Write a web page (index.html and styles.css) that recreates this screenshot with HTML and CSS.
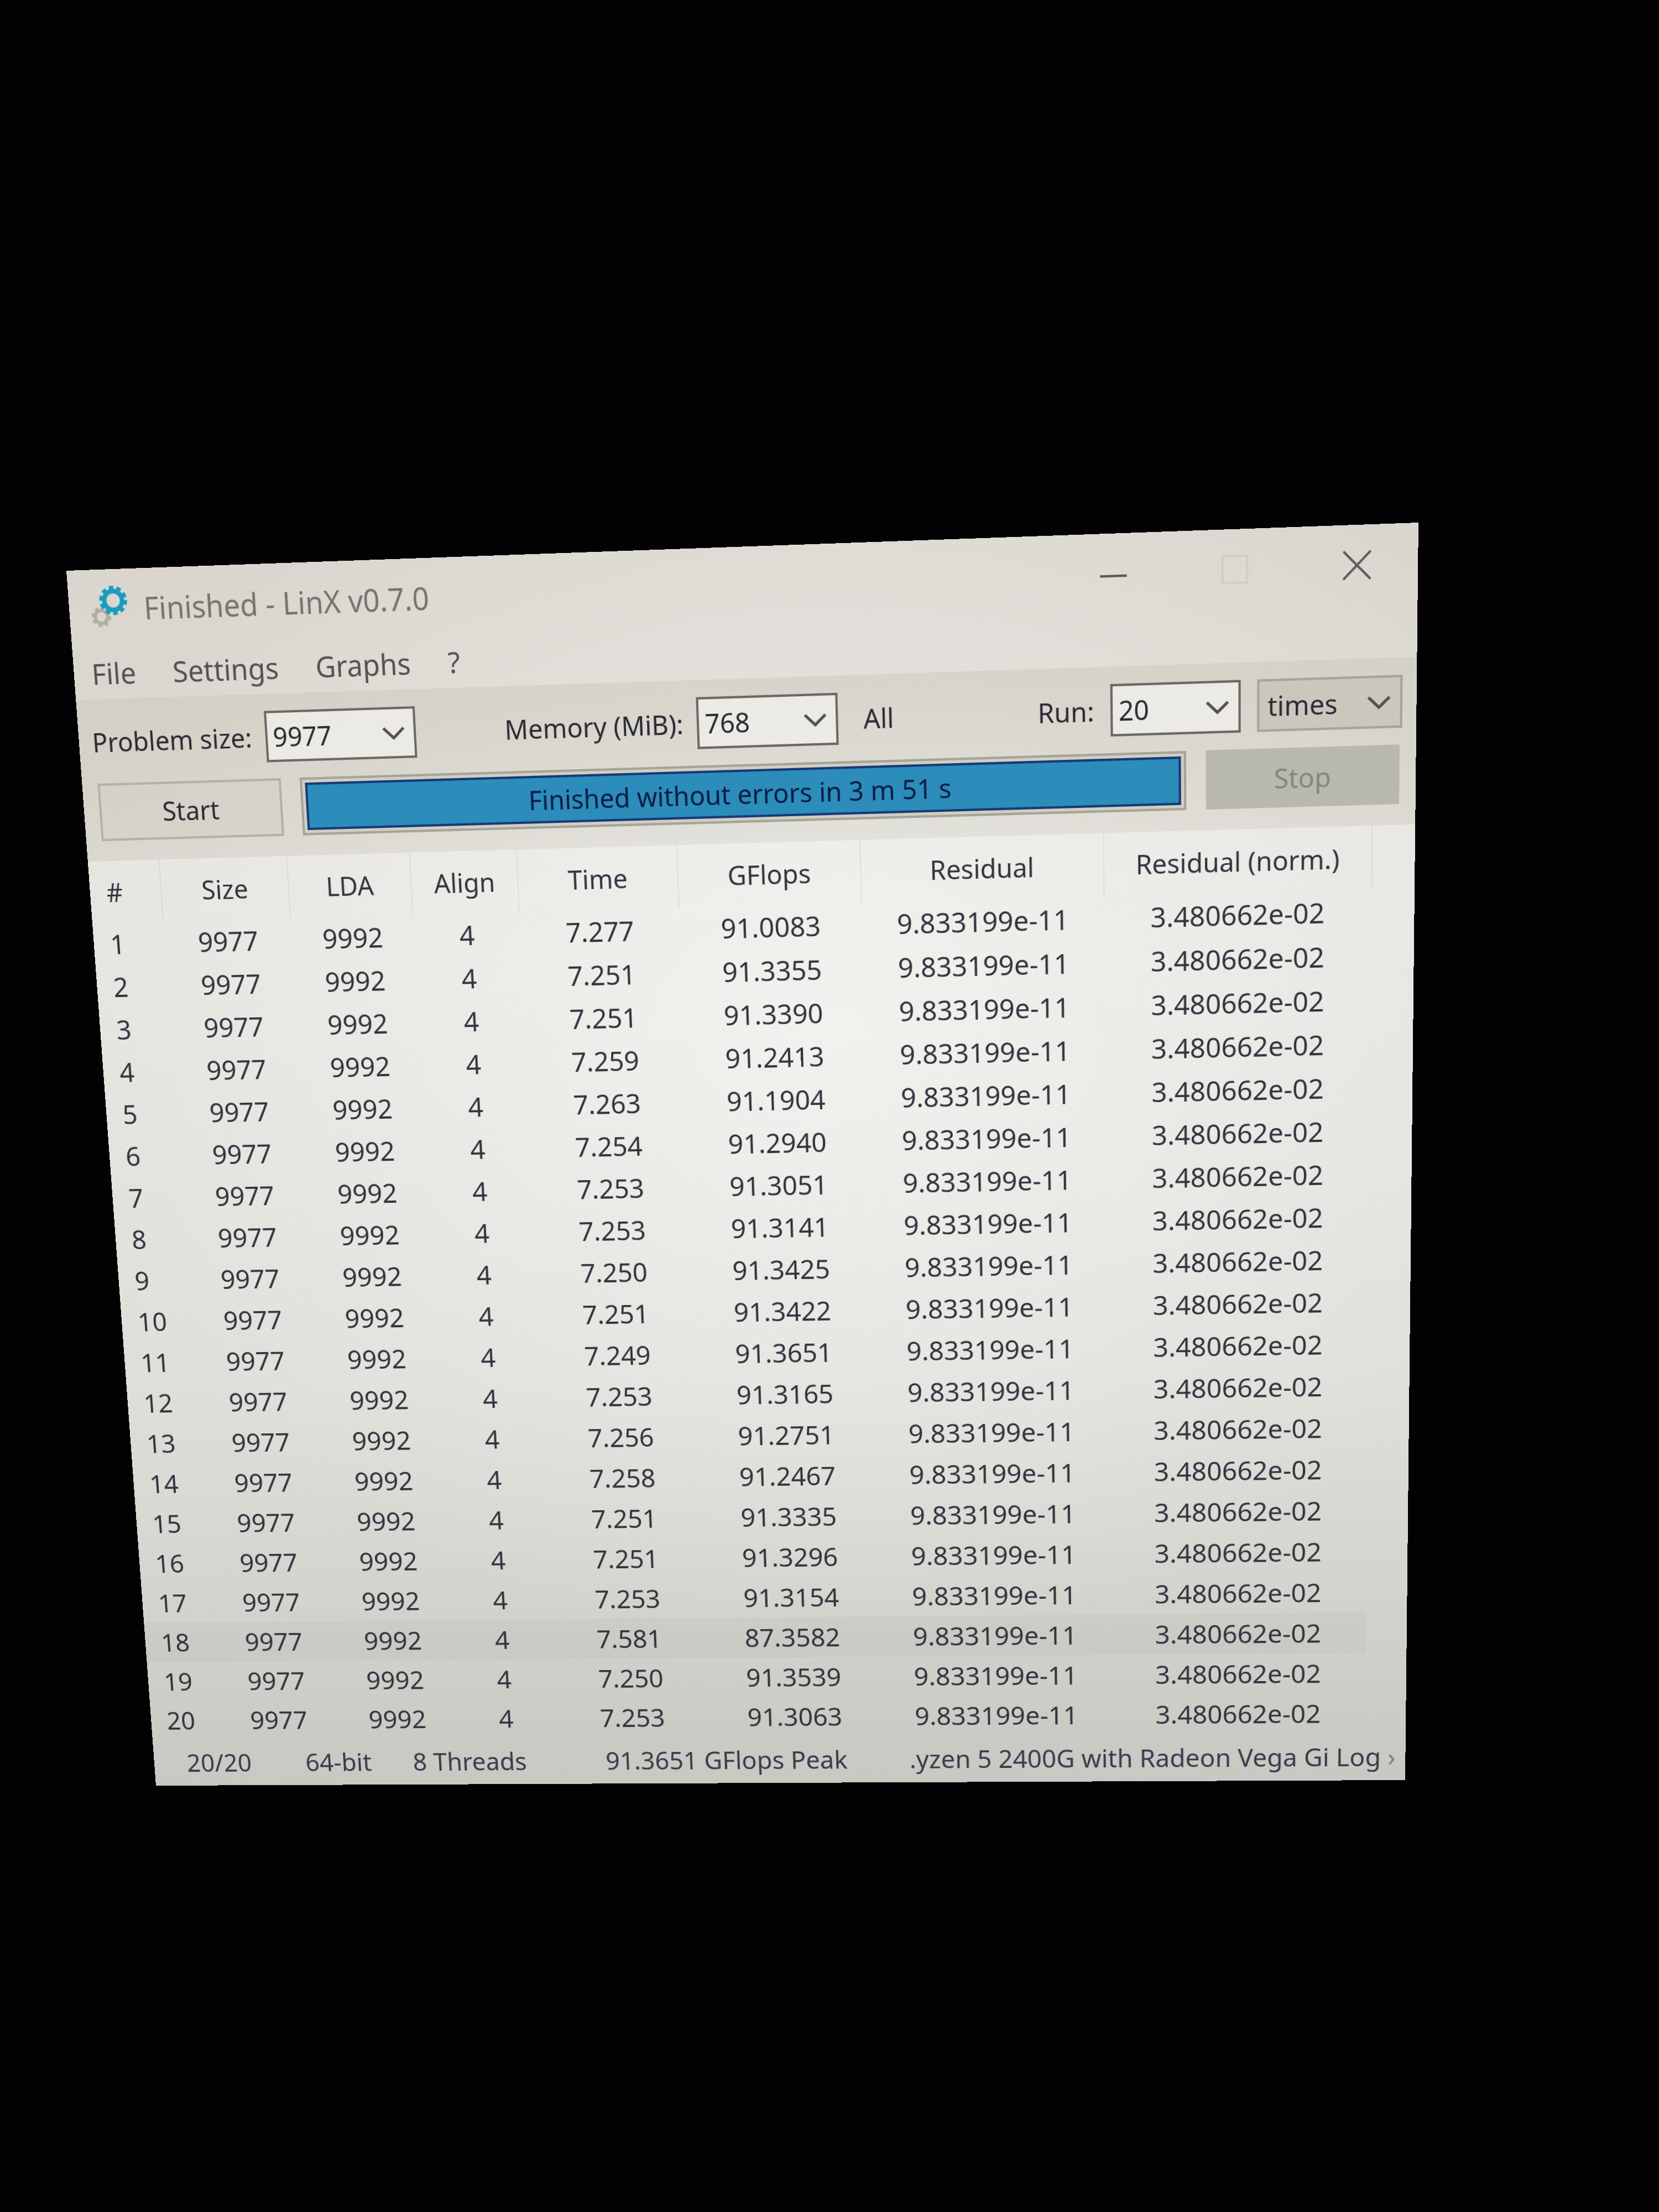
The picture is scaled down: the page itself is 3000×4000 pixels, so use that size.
FILE: index.html
```html
<!DOCTYPE html>
<html lang="en">
<head>
<meta charset="utf-8">
<title>Finished - LinX v0.7.0</title>
<link rel="stylesheet" href="styles.css">
</head>
<body>
<main class="desktop">
<div class="window">
  <header class="titlebar">
    <svg class="app-icon" viewBox="0 0 84 84" aria-hidden="true">
      <g fill="none" stroke="#b0afa2">
        <circle cx="21" cy="56" r="11" stroke-width="6"/>
        <circle cx="21" cy="56" r="15" stroke-width="5" stroke-dasharray="6 5.8"/>
      </g>
      <g fill="none" stroke="#1b9bc0">
        <circle cx="44" cy="29" r="16" stroke-width="8"/>
        <circle cx="44" cy="29" r="22" stroke-width="6" stroke-dasharray="8 5.82"/>
      </g>
    </svg>
    <h1 class="title">Finished - LinX v0.7.0</h1>
    <div class="window-controls">
      <button class="control" aria-label="Minimize"><svg viewBox="0 0 48 48"><path d="M1 28H47"/></svg></button>
      <button class="control" aria-label="Maximize" disabled><svg viewBox="0 0 48 48"><path d="M3 2H45V46H3Z"/></svg></button>
      <button class="control" aria-label="Close"><svg viewBox="0 0 48 48"><path d="M1 1L47 47M47 1L1 47"/></svg></button>
    </div>
  </header>
  <nav class="menu">
    <button>File</button>
    <button>Settings</button>
    <button>Graphs</button>
    <button>?</button>
  </nav>
  <section class="toolbar">
    <div class="options">
      <div class="field">
        <label for="size">Problem size:</label>
        <span class="combo combo-size"><select id="size"><option>9977</option></select><svg viewBox="0 0 40 22"><path d="M2 2L20 19L38 2"/></svg></span>
      </div>
      <div class="field">
        <label for="memory">Memory (MiB):</label>
        <span class="combo combo-memory"><select id="memory"><option>768</option></select><svg viewBox="0 0 40 22"><path d="M2 2L20 19L38 2"/></svg></span>
        <button class="all">All</button>
      </div>
      <div class="field">
        <label for="runs">Run:</label>
        <span class="combo combo-runs"><select id="runs"><option>20</option></select><svg viewBox="0 0 40 22"><path d="M2 2L20 19L38 2"/></svg></span>
        <span class="combo combo-unit"><select id="unit" aria-label="Run unit"><option>times</option></select><svg viewBox="0 0 40 22"><path d="M2 2L20 19L38 2"/></svg></span>
      </div>
    </div>
    <div class="actions">
      <button class="action">Start</button>
      <div class="progress" role="progressbar" aria-valuenow="100" aria-valuemin="0" aria-valuemax="100"><span class="progress-fill">Finished without errors in 3 m 51 s</span></div>
      <button class="action" disabled>Stop</button>
    </div>
  </section>
  <table class="results">
    <colgroup><col class="c-num"><col class="c-size"><col class="c-lda"><col class="c-align"><col class="c-time"><col class="c-gflops"><col class="c-residual"><col class="c-norm"><col></colgroup>
    <thead>
      <tr><th>#</th><th>Size</th><th>LDA</th><th>Align</th><th>Time</th><th>GFlops</th><th>Residual</th><th>Residual (norm.)</th><th></th></tr>
    </thead>
    <tbody>
      <tr><td>1</td><td>9977</td><td>9992</td><td>4</td><td>7.277</td><td>91.0083</td><td>9.833199e-11</td><td>3.480662e-02</td><td></td></tr>
      <tr><td>2</td><td>9977</td><td>9992</td><td>4</td><td>7.251</td><td>91.3355</td><td>9.833199e-11</td><td>3.480662e-02</td><td></td></tr>
      <tr><td>3</td><td>9977</td><td>9992</td><td>4</td><td>7.251</td><td>91.3390</td><td>9.833199e-11</td><td>3.480662e-02</td><td></td></tr>
      <tr><td>4</td><td>9977</td><td>9992</td><td>4</td><td>7.259</td><td>91.2413</td><td>9.833199e-11</td><td>3.480662e-02</td><td></td></tr>
      <tr><td>5</td><td>9977</td><td>9992</td><td>4</td><td>7.263</td><td>91.1904</td><td>9.833199e-11</td><td>3.480662e-02</td><td></td></tr>
      <tr><td>6</td><td>9977</td><td>9992</td><td>4</td><td>7.254</td><td>91.2940</td><td>9.833199e-11</td><td>3.480662e-02</td><td></td></tr>
      <tr><td>7</td><td>9977</td><td>9992</td><td>4</td><td>7.253</td><td>91.3051</td><td>9.833199e-11</td><td>3.480662e-02</td><td></td></tr>
      <tr><td>8</td><td>9977</td><td>9992</td><td>4</td><td>7.253</td><td>91.3141</td><td>9.833199e-11</td><td>3.480662e-02</td><td></td></tr>
      <tr><td>9</td><td>9977</td><td>9992</td><td>4</td><td>7.250</td><td>91.3425</td><td>9.833199e-11</td><td>3.480662e-02</td><td></td></tr>
      <tr><td>10</td><td>9977</td><td>9992</td><td>4</td><td>7.251</td><td>91.3422</td><td>9.833199e-11</td><td>3.480662e-02</td><td></td></tr>
      <tr><td>11</td><td>9977</td><td>9992</td><td>4</td><td>7.249</td><td>91.3651</td><td>9.833199e-11</td><td>3.480662e-02</td><td></td></tr>
      <tr><td>12</td><td>9977</td><td>9992</td><td>4</td><td>7.253</td><td>91.3165</td><td>9.833199e-11</td><td>3.480662e-02</td><td></td></tr>
      <tr><td>13</td><td>9977</td><td>9992</td><td>4</td><td>7.256</td><td>91.2751</td><td>9.833199e-11</td><td>3.480662e-02</td><td></td></tr>
      <tr><td>14</td><td>9977</td><td>9992</td><td>4</td><td>7.258</td><td>91.2467</td><td>9.833199e-11</td><td>3.480662e-02</td><td></td></tr>
      <tr><td>15</td><td>9977</td><td>9992</td><td>4</td><td>7.251</td><td>91.3335</td><td>9.833199e-11</td><td>3.480662e-02</td><td></td></tr>
      <tr><td>16</td><td>9977</td><td>9992</td><td>4</td><td>7.251</td><td>91.3296</td><td>9.833199e-11</td><td>3.480662e-02</td><td></td></tr>
      <tr><td>17</td><td>9977</td><td>9992</td><td>4</td><td>7.253</td><td>91.3154</td><td>9.833199e-11</td><td>3.480662e-02</td><td></td></tr>
      <tr class="slow"><td>18</td><td>9977</td><td>9992</td><td>4</td><td>7.581</td><td>87.3582</td><td>9.833199e-11</td><td>3.480662e-02</td><td></td></tr>
      <tr><td>19</td><td>9977</td><td>9992</td><td>4</td><td>7.250</td><td>91.3539</td><td>9.833199e-11</td><td>3.480662e-02</td><td></td></tr>
      <tr><td>20</td><td>9977</td><td>9992</td><td>4</td><td>7.253</td><td>91.3063</td><td>9.833199e-11</td><td>3.480662e-02</td><td></td></tr>
    </tbody>
  </table>
  <footer class="status">
    <span>20/20</span>
    <span>64-bit</span>
    <span>8 Threads</span>
    <span>91.3651 GFlops Peak</span>
    <span class="cpu">.yzen 5 2400G with Radeon Vega Gi <button class="log">Log <span class="more">›</span></button></span>
  </footer>
</div>
</main>
</body>
</html>
```
FILE: styles.css
```css
* { box-sizing: border-box; }

body {
  margin: 0;
  background: #020203;
  color: #35333f;
  font-family: "Noto Sans", "Open Sans", sans-serif;
  font-size: 46px;
}

button, select {
  font: inherit;
  color: inherit;
  background: none;
  border: 0;
  padding: 0;
  margin: 0;
}

.desktop {
  min-height: 100vh;
  padding: 1032px 530px 0 120px;
  overflow: hidden;
}

/* The window lies on a plane that is seen from an angle. */
.window {
  background:
    radial-gradient(ellipse 62% 50% at 56% 38%, rgba(255, 255, 255, 0.5), rgba(255, 255, 255, 0) 100%),
    linear-gradient(#dad6cf, #dcdad3 30%, #d9d8d2 65%, #c7c9c2);
  transform-origin: 0 0;
  transform: matrix3d(1.00557, -0.035783, 0, -0.000014255, 0.079026, 1.07174, 0, 0.000036962, 0, 0, 1, 0, 0, 0, 0, 1);
}

/* Title bar */
.titlebar {
  display: flex;
  align-items: center;
  height: 132px;
  padding-left: 36px;
}
.app-icon { width: 84px; height: 84px; margin-right: 14px; }
.title {
  flex: 1;
  margin: 0;
  font-size: 52px;
  font-weight: 400;
  color: #77736e;
}
.window-controls { display: flex; }
.control { width: 207px; height: 132px; }
.control svg {
  display: block;
  width: 48px;
  height: 48px;
  margin: 0 auto;
  fill: none;
  stroke: #5f5a58;
  stroke-width: 4;
}
.control:disabled svg { stroke: #cdd0c5; }

/* Menu */
.menu {
  display: flex;
  align-items: center;
  gap: 66px;
  height: 88px;
  padding-left: 32px;
  font-size: 50px;
  color: #55514f;
}

/* Toolbar */
.toolbar {
  display: flex;
  flex-direction: column;
  gap: 28px;
  padding: 29px 24px 35px;
  background: linear-gradient(rgba(200, 198, 182, 0.45), rgba(206, 204, 192, 0.2));
  color: #2b2934;
}
.options { display: grid; grid-template-columns: 741px 1fr auto; }
.field { display: flex; align-items: center; gap: 24px; }
.field:last-child { gap: 28px; }
.all { margin-left: 20px; }
.combo {
  position: relative;
  display: block;
  height: 88px;
}
.combo select {
  width: 100%;
  height: 100%;
  padding-left: 10px;
  appearance: none;
  background: rgba(240, 239, 234, 0.8);
  border: 4px solid #6d6868;
  border-radius: 0;
}
.combo svg {
  position: absolute;
  right: 20px;
  top: 34px;
  width: 40px;
  height: 22px;
  fill: none;
  stroke: #55504f;
  stroke-width: 5;
  pointer-events: none;
}
.combo-size { width: 270px; }
.combo-memory { width: 248px; }
.combo-runs { width: 224px; }
.combo-unit { width: 248px; }
.combo-unit select { background: #cac8bc; border-color: #a6a59b; padding-left: 14px; }

.actions { display: flex; gap: 34px; padding: 0 4px; }
.action {
  width: 332px;
  height: 100px;
  background: rgba(210, 208, 197, 0.5);
  border: 4px solid #b3b2a5;
}
.action:disabled { background: #b8b8ac; border-color: #b8b8ac; color: #858680; }
.progress {
  flex: 1;
  height: 100px;
  padding: 5px;
  background: #d0cfc0;
  border: 4px solid #a5a498;
}
.progress-fill {
  display: flex;
  align-items: center;
  justify-content: center;
  height: 100%;
  background: #2c8cba;
  border: 4px solid #17397a;
  color: #0b1c45;
}

/* Results */
.results {
  width: 100%;
  table-layout: fixed;
  border-collapse: collapse;
  background: linear-gradient(rgba(255, 255, 255, 0.3), rgba(255, 255, 255, 0.12) 75%, rgba(255, 255, 255, 0));
}
.results th, .results td { padding: 0; text-align: center; }
.results th {
  height: 108px;
  font-weight: 400;
  border-right: 2px solid rgba(150, 150, 140, 0.15);
}
.results th:last-child { border-right: 0; }
.results td { height: 76px; font-size: 48px; line-height: 76px; }
.results th:first-child, .results td:first-child { padding-left: 30px; text-align: left; }
.slow td { background: rgba(180, 165, 160, 0.14); }
.slow td:last-child { background: none; }
.c-num { width: 130px; }
.c-size { width: 232px; }
.c-lda { width: 222px; }
.c-align { width: 192px; }
.c-time { width: 286px; }
.c-gflops { width: 324px; }
.c-residual { width: 426px; }
.c-norm { width: 464px; }

/* Status bar */
.status {
  display: grid;
  grid-template-columns: 229px 206px 367px 571px 1fr;
  align-items: center;
  height: 90px;
  padding-left: 63px;
  font-size: 47px;
  color: #3c3a4c;
  white-space: nowrap;
}
.more { color: #7c7b86; }
```
